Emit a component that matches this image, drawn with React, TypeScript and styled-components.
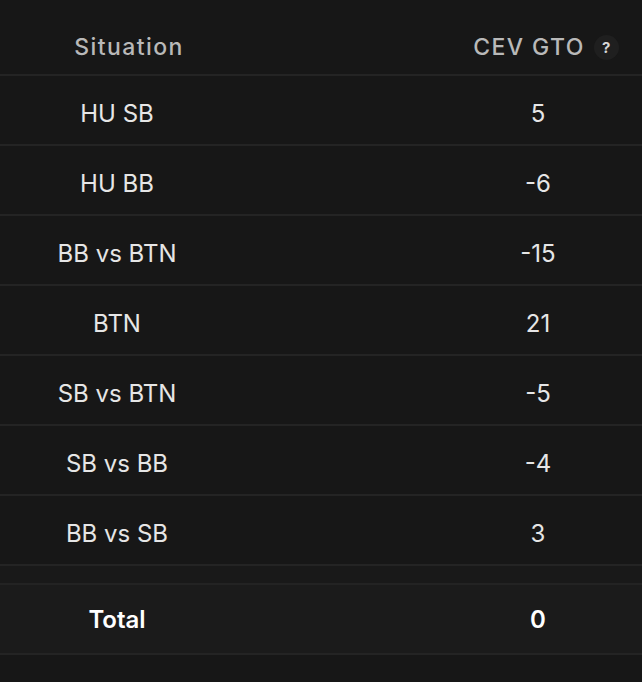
import React from "react";
import styled, { createGlobalStyle } from "styled-components";

const GlobalStyle = createGlobalStyle`
  html, body {
    margin: 0;
    padding: 0;
    background: #171717;
  }
  body {
    font-family: Inter, "Noto Sans", sans-serif;
    -webkit-font-smoothing: antialiased;
  }
`;

const Table = styled.div`
  width: 642px;
  height: 682px;
  background: #171717;
  display: flex;
  flex-direction: column;
`;

const Row = styled.div<{ height: number; total?: boolean }>`
  display: grid;
  grid-template-columns: 234px 1fr 208px;
  align-items: center;
  height: ${(p) => p.height}px;
  border-bottom: 2px solid #242424;
  background: ${(p) => (p.total ? "#1b1b1b" : "#171717")};
  box-sizing: border-box;
`;

const Spacer = styled.div`
  height: 19px;
  border-bottom: 2px solid #232323;
  background: #191919;
  box-sizing: border-box;
`;

const HeadCell = styled.div<{ shift: number }>`
  display: flex;
  justify-content: center;
  align-items: center;
  gap: 9px;
  padding-left: ${(p) => p.shift}px;
  padding-top: 20px;
  font-size: 23px;
  font-weight: 500;
  letter-spacing: 1.4px;
  color: #b9b9b9;
`;

const Cell = styled.div<{ bold?: boolean }>`
  text-align: center;
  font-size: 24px;
  font-weight: ${(p) => (p.bold ? 600 : 400)};
  color: ${(p) => (p.bold ? "#ffffff" : "#e6e6e6")};
  padding-top: ${(p) => (p.bold ? 0 : 6)}px;
`;

const Help = styled.span`
  width: 25px;
  height: 25px;
  border-radius: 50%;
  background: #1f1f1f;
  color: #d8d8d8;
  font-size: 15px;
  font-weight: 700;
  letter-spacing: 0;
  display: inline-flex;
  align-items: center;
  justify-content: center;
`;

const rows = [
  { name: "HU SB", cev: "5" },
  { name: "HU BB", cev: "-6" },
  { name: "BB vs BTN", cev: "-15" },
  { name: "BTN", cev: "21" },
  { name: "SB vs BTN", cev: "-5" },
  { name: "SB vs BB", cev: "-4" },
  { name: "BB vs SB", cev: "3" },
];

const App = () => {
  return (
    <Table>
      <GlobalStyle />
      <Row height={76}>
        <HeadCell shift={24}>Situation</HeadCell>
        <div />
        <HeadCell shift={16}>
          CEV GTO <Help>?</Help>
        </HeadCell>
      </Row>
      {rows.map((r) => (
        <Row height={70} key={r.name}>
          <Cell>{r.name}</Cell>
          <div />
          <Cell>{r.cev}</Cell>
        </Row>
      ))}
      <Spacer />
      <Row height={70} total>
        <Cell bold>Total</Cell>
        <div />
        <Cell bold>0</Cell>
      </Row>
    </Table>
  );
};

export default App;
